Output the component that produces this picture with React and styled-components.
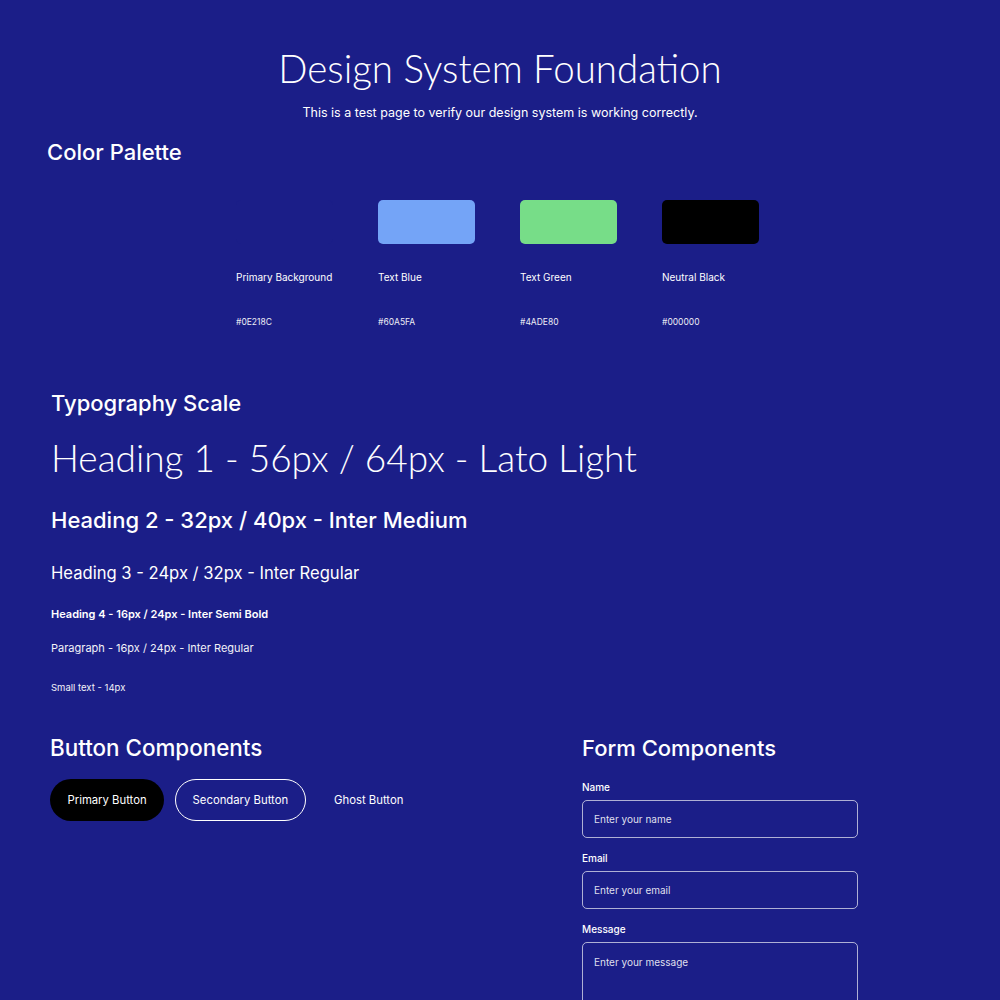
import React from "react";
import styled, { createGlobalStyle } from "styled-components";

const Global = createGlobalStyle`
  html, body { margin: 0; padding: 0; background: #1b1e88; }
  body { font-family: Inter, "Noto Sans", sans-serif; color: #ffffff; }
  * { box-sizing: border-box; }
`;

const Page = styled.div`
  width: 1000px;
  min-height: 1000px;
  background: #1b1e88;
  overflow: hidden;
`;

const Header = styled.header`
  padding-top: 44px;
  display: flex;
  flex-direction: column;
  align-items: center;
`;

const Title = styled.h1`
  margin: 0;
  font-family: Lato, sans-serif;
  font-weight: 300;
  font-size: 38.5px;
  line-height: 48px;
`;

const Subtitle = styled.p`
  margin: 11px 0 0;
  font-size: 12.5px;
  line-height: 20px;
  font-weight: 400;
`;

const Section = styled.section`
  padding: ${(p) => p.$pad || "0 0 0 50px"};
  margin-top: ${(p) => p.$top || 0}px;
`;

const SectionTitle = styled.h2`
  margin: 0 0 0 ${(p) => p.$shift || 0}px;
  font-size: ${(p) => p.$size || 22}px;
  line-height: 28px;
  font-weight: 500;
`;

const SwatchGrid = styled.div`
  display: grid;
  grid-template-columns: repeat(4, 96px);
  column-gap: 46px;
  justify-content: center;
  margin: 34px 0 0 -56px;
`;

const SwatchItem = styled.div`
  display: flex;
  flex-direction: column;
`;

const Swatch = styled.div`
  width: 97px;
  height: 44px;
  border-radius: 5px;
  background: ${(p) => p.$color};
`;

const SwatchName = styled.div`
  margin-top: 26px;
  font-size: 10px;
  line-height: 14px;
  font-weight: 400;
  white-space: nowrap;
`;

const SwatchHex = styled.div`
  margin-top: 32px;
  font-size: 8.5px;
  line-height: 12px;
  opacity: 0.92;
`;

const TypeList = styled.div`
  display: flex;
  flex-direction: column;
`;

const Sample = styled.div`
  margin-top: ${(p) => p.$top}px;
  font-family: ${(p) => (p.$lato ? "Lato, sans-serif" : "Inter, sans-serif")};
  font-size: ${(p) => p.$size}px;
  line-height: ${(p) => p.$lh}px;
  font-weight: ${(p) => p.$weight};
  white-space: nowrap;
  opacity: ${(p) => p.$op || 1};
`;

const Columns = styled.div`
  display: grid;
  grid-template-columns: 532px 276px;
  margin-top: 39px;
  padding-left: 50px;
`;

const ButtonRow = styled.div`
  display: flex;
  gap: 11px;
  margin-top: 17px;
`;

const Button = styled.button`
  height: 42px;
  padding: 0 16.5px;
  border-radius: 21px;
  font-family: Inter, sans-serif;
  font-size: 11.3px;
  font-weight: 400;
  color: #ffffff;
  cursor: pointer;
  background: ${(p) => (p.$variant === "primary" ? "#000000" : "transparent")};
  border: ${(p) =>
    p.$variant === "secondary" ? "1.5px solid #ffffff" : "1.5px solid transparent"};
`;

const Form = styled.form`
  display: flex;
  flex-direction: column;
  gap: 13px;
  margin-top: 18px;
`;

const Field = styled.label`
  display: flex;
  flex-direction: column;
  gap: 6px;
`;

const Label = styled.span`
  font-size: 10px;
  line-height: 14px;
  font-weight: 500;
`;

const inputStyles = `
  width: 276px;
  border: 1px solid rgba(255, 255, 255, 0.65);
  border-radius: 5px;
  background: transparent;
  color: #ffffff;
  font-family: Inter, sans-serif;
  font-size: 10px;
  padding: 0 11px;
  outline: none;
  &::placeholder { color: rgba(255, 255, 255, 0.88); }
`;

const Input = styled.input`
  ${inputStyles}
  height: 38px;
`;

const TextArea = styled.textarea`
  ${inputStyles}
  height: 100px;
  padding-top: 13px;
  resize: none;
`;

const swatches = [
  { name: "Primary Background", hex: "#0E218C", color: "#1b1e88" },
  { name: "Text Blue", hex: "#60A5FA", color: "#74a4f7" },
  { name: "Text Green", hex: "#4ADE80", color: "#77dd88" },
  { name: "Neutral Black", hex: "#000000", color: "#000000" },
];

export default function App() {
  return (
    <Page>
      <Global />
      <Header>
        <Title>Design System Foundation</Title>
        <Subtitle>This is a test page to verify our design system is working correctly.</Subtitle>
      </Header>

      <Section $top={15}>
        <SectionTitle $shift={-3}>Color Palette</SectionTitle>
        <SwatchGrid>
          {swatches.map((s) => (
            <SwatchItem key={s.name}>
              <Swatch $color={s.color} />
              <SwatchName>{s.name}</SwatchName>
              <SwatchHex>{s.hex}</SwatchHex>
            </SwatchItem>
          ))}
        </SwatchGrid>
      </Section>

      <Section $top={61} $pad="0 0 0 51px">
        <SectionTitle>Typography Scale</SectionTitle>
        <TypeList>
          <Sample $top={17} $lato $size={37} $lh={48} $weight={300}>
            Heading 1 - 56px / 64px - Lato Light
          </Sample>
          <Sample $top={24} $size={22} $lh={28} $weight={500}>
            Heading 2 - 32px / 40px - Inter Medium
          </Sample>
          <Sample $top={27} $size={16.6} $lh={24} $weight={400}>
            Heading 3 - 24px / 32px - Inter Regular
          </Sample>
          <Sample $top={21} $size={11} $lh={16} $weight={600}>
            Heading 4 - 16px / 24px - Inter Semi Bold
          </Sample>
          <Sample $top={18} $size={11} $lh={16} $weight={400} $op={0.95}>
            Paragraph - 16px / 24px - Inter Regular
          </Sample>
          <Sample $top={25} $size={9.5} $lh={14} $weight={400} $op={0.95}>
            Small text - 14px
          </Sample>
        </TypeList>
      </Section>

      <Columns>
        <div>
          <SectionTitle $size={22.4}>Button Components</SectionTitle>
          <ButtonRow>
            <Button $variant="primary" type="button">Primary Button</Button>
            <Button $variant="secondary" type="button">Secondary Button</Button>
            <Button $variant="ghost" type="button">Ghost Button</Button>
          </ButtonRow>
        </div>
        <div>
          <SectionTitle>Form Components</SectionTitle>
          <Form onSubmit={(e) => e.preventDefault()}>
            <Field>
              <Label>Name</Label>
              <Input placeholder="Enter your name" />
            </Field>
            <Field>
              <Label>Email</Label>
              <Input placeholder="Enter your email" />
            </Field>
            <Field>
              <Label>Message</Label>
              <TextArea placeholder="Enter your message" />
            </Field>
          </Form>
        </div>
      </Columns>
    </Page>
  );
}
